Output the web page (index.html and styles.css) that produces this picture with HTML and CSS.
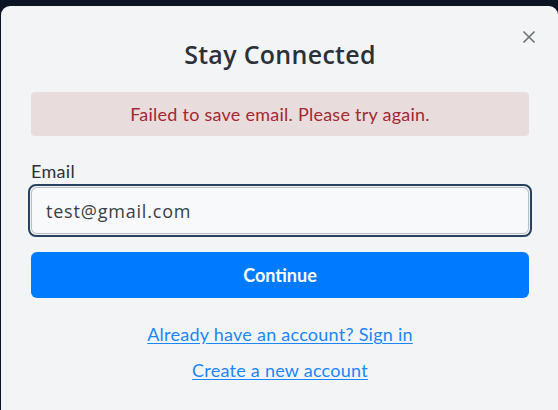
FILE: index.html
```html
<!DOCTYPE html>
<html lang="en">
<head>
<meta charset="utf-8">
<title>Stay Connected</title>
<link rel="stylesheet" href="styles.css">
</head>
<body>
<div class="backdrop">
  <div class="modal">
    <button class="close" aria-label="Close">
      <svg width="14" height="14" viewBox="0 0 14 14"><path d="M1.5 1.5 L12.5 12.5 M12.5 1.5 L1.5 12.5" stroke="#6c7278" stroke-width="1.6" fill="none"/></svg>
    </button>
    <h1 class="title">Stay Connected</h1>
    <div class="alert">Failed to save email. Please try again.</div>
    <label class="label" for="email">Email</label>
    <div class="field">
      <input id="email" class="input" type="email" value="test@gmail.com">
    </div>
    <button class="btn">Continue</button>
    <div class="links">
      <a href="#" class="link">Already have an account? Sign in</a>
      <a href="#" class="link">Create a new account</a>
    </div>
  </div>
</div>
</body>
</html>
```
FILE: styles.css
```css
html, body {
  margin: 0;
  padding: 0;
  height: 100%;
}
body {
  background: #0c1424;
  font-family: "Lato", "Open Sans", sans-serif;
  overflow: hidden;
}
.backdrop {
  padding: 6px 0 0 1px;
  height: 100%;
  box-sizing: border-box;
}
.modal {
  position: relative;
  background: #f3f4f5;
  border-radius: 9px 9px 0 0;
  width: 557px;
  height: 420px;
  box-sizing: border-box;
  padding: 31px 29px 0 30px;
  display: flex;
  flex-direction: column;
}
.close {
  position: absolute;
  top: 24px;
  right: 22px;
  background: none;
  border: 0;
  padding: 0;
  width: 14px;
  height: 14px;
  cursor: pointer;
}
.close svg { display: block; }
.title {
  margin: 0;
  text-align: center;
  font-family: "Open Sans", sans-serif;
  font-weight: 600;
  font-size: 25px;
  line-height: 34px;
  color: #2b3138;
  letter-spacing: 0.3px;
}
.alert {
  margin-top: 21px;
  background: #e9dcdd;
  color: #a3292f;
  border-radius: 4px;
  height: 44px;
  display: flex;
  align-items: center;
  justify-content: center;
  font-size: 18px;
  letter-spacing: 0.25px;
  padding-bottom: 1px;
  box-sizing: border-box;
}
.label {
  margin-top: 24px;
  font-size: 18px;
  line-height: 22px;
  color: #2b3138;
  letter-spacing: 0.3px;
}
.field {
  margin: 2px -3px 0 -3px;
  border: 2px solid #26415f;
  border-radius: 8px;
  padding: 1px;
  height: 53px;
  box-sizing: border-box;
}
.input {
  display: block;
  width: 100%;
  height: 100%;
  box-sizing: border-box;
  border: 1px solid #b5bcc4;
  border-radius: 6px;
  background: #f8f9fa;
  font-family: "Open Sans", sans-serif;
  font-size: 18px;
  letter-spacing: 0.8px;
  color: #3a3f45;
  padding: 0 14px;
  outline: none;
}
.btn {
  margin-top: 15px;
  height: 46px;
  border: 0;
  border-radius: 6px;
  background: #007bff;
  color: #fff;
  font-family: inherit;
  font-weight: 700;
  font-size: 18px;
  cursor: pointer;
}
.links {
  margin-top: 25px;
  display: flex;
  flex-direction: column;
  align-items: center;
  gap: 14px;
}
.link {
  color: #1a87ff;
  font-size: 18px;
  line-height: 22px;
  letter-spacing: 0.25px;
  text-decoration: underline;
  text-underline-offset: 2px;
}
```
